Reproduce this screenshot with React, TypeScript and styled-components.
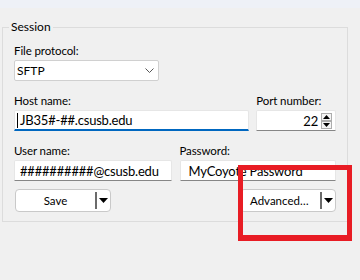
import React from "react";
import styled, { createGlobalStyle } from "styled-components";

const Global = createGlobalStyle`
  html, body { margin: 0; padding: 0; background: #f0f0f0; }
  body { width: 360px; height: 280px; overflow: hidden; font-family: Lato, "Noto Sans", sans-serif; color: #000; }
`;

const Page = styled.div`
  position: relative;
  width: 360px;
  height: 280px;
  background: #f0f0f0;
`;

const TopStrip = styled.div`
  height: 8px;
  background: #eef1f7;
`;

const Group = styled.section`
  position: relative;
  margin: 19px 0 0 2px;
  padding: 14px 11px 9px 11px;
  width: 346px;
  box-sizing: border-box;
  border: 1px solid #dcdcdc;
`;

const Legend = styled.div`
  position: absolute;
  top: -9px;
  left: 6px;
  padding: 0 2px;
  background: #f0f0f0;
  font-size: 12px;
  line-height: 16px;
`;

const Rows = styled.div`
  display: flex;
  flex-direction: column;
  gap: 11px;
`;

const Row = styled.div<{ $gap: number }>`
  display: flex;
  gap: ${(p) => p.$gap}px;
`;

const Field = styled.div<{ $w: number }>`
  display: flex;
  flex-direction: column;
  gap: 1px;
  width: ${(p) => p.$w}px;
`;

const Label = styled.div`
  font-size: 11.5px;
  letter-spacing: -0.1px;
  line-height: 17px;
  height: 17px;
`;

const Combo = styled.div`
  box-sizing: border-box;
  height: 21px;
  width: 145px;
  background: #fff;
  border: 1px solid #d0d0d0;
  border-radius: 2px;
  display: flex;
  align-items: center;
  justify-content: space-between;
  padding: 0 4px 0 2px;
  font-size: 12px;
`;

const Input = styled.div<{ $focus?: boolean; $align?: string; $pl?: number }>`
  box-sizing: border-box;
  height: 21px;
  background: #fff;
  border: 1px solid #e6e6e6;
  border-bottom: ${(p) => (p.$focus ? "2px solid #0067c0" : "1px solid #868686")};
  border-radius: 2px 2px 0 0;
  display: flex;
  align-items: center;
  justify-content: ${(p) => p.$align || "flex-start"};
  padding: 0 3px 0 ${(p) => p.$pl ?? 5}px;
  font-size: 13px;
  letter-spacing: -0.2px;
  white-space: nowrap;
  overflow: hidden;
`;

const Caret = styled.span`
  display: inline-block;
  width: 1px;
  height: 15px;
  background: #000;
  margin-right: 2px;
  margin-left: -3px;
`;

const SpinWrap = styled.div`
  display: flex;
  align-items: center;
  gap: 3px;
  height: 100%;
`;

const Spin = styled.div`
  display: flex;
  flex-direction: column;
`;

const SpinBtn = styled.div`
  width: 11px;
  height: 8px;
  box-sizing: border-box;
  border: 1px solid #adadad;
  background: #f4f4f4;
  display: flex;
  align-items: center;
  justify-content: center;
`;

const ButtonRow = styled.div`
  display: flex;
  justify-content: space-between;
  padding: 0 0 0 1px;
  margin-top: -3px;
`;

const SplitButton = styled.div`
  box-sizing: border-box;
  width: 96px;
  height: 23px;
  background: #fff;
  border: 1px solid #c9c9c9;
  border-radius: 4px;
  display: flex;
  align-items: center;
  font-size: 11.5px;
`;

const BtnText = styled.div<{ $align: string }>`
  flex: 1;
  text-align: ${(p) => p.$align};
  padding-left: ${(p) => (p.$align === "left" ? "9px" : "0")};
`;

const Divider = styled.div`
  width: 2px;
  height: 17px;
  background: #6b6b6b;
`;

const Arrow = styled.div`
  width: 12px;
  display: flex;
  justify-content: center;
  margin-right: 1px;
`;

const Highlight = styled.div`
  position: absolute;
  left: 238px;
  top: 165px;
  width: 114px;
  height: 76px;
  box-sizing: border-box;
  border: 5px solid #e81c24;
  border-bottom-width: 6px;
  pointer-events: none;
`;

const Tri = ({ up }: { up?: boolean }) => (
  <svg width="7" height="4" viewBox="0 0 7 4">
    <path d={up ? "M0 4 L3.5 0 L7 4 Z" : "M0 0 L7 0 L3.5 4 Z"} fill="#000" />
  </svg>
);

const DropTri = () => (
  <svg width="9" height="5" viewBox="0 0 9 5">
    <path d="M0 0 L9 0 L4.5 5 Z" fill="#000" />
  </svg>
);

const Chevron = () => (
  <svg width="9" height="5" viewBox="0 0 9 5">
    <path d="M0.5 0.5 L4.5 4.5 L8.5 0.5" fill="none" stroke="#555" strokeWidth="1" />
  </svg>
);

export default function App() {
  return (
    <Page>
      <Global />
      <TopStrip />
      <Group>
        <Legend>Session</Legend>
        <Rows>
          <Field $w={145}>
            <Label>File protocol:</Label>
            <Combo>
              <span>SFTP</span>
              <Chevron />
            </Combo>
          </Field>
          <Row $gap={7}>
            <Field $w={236}>
              <Label>Host name:</Label>
              <Input $focus>
                <Caret />
                JB35#-##.csusb.edu
              </Input>
            </Field>
            <Field $w={80}>
              <Label>Port number:</Label>
              <Input $align="flex-end">
                <SpinWrap>
                  <span>22</span>
                  <Spin>
                    <SpinBtn>
                      <Tri up />
                    </SpinBtn>
                    <SpinBtn>
                      <Tri />
                    </SpinBtn>
                  </Spin>
                </SpinWrap>
              </Input>
            </Field>
          </Row>
          <Row $gap={8}>
            <Field $w={158}>
              <Label>User name:</Label>
              <Input>##########@csusb.edu</Input>
            </Field>
            <Field $w={157}>
              <Label>Password:</Label>
              <Input $pl={8}>MyCoyote Password</Input>
            </Field>
          </Row>
          <ButtonRow>
            <SplitButton>
              <BtnText $align="center">Save</BtnText>
              <Divider />
              <Arrow>
                <DropTri />
              </Arrow>
            </SplitButton>
            <SplitButton>
              <BtnText $align="left">Advanced…</BtnText>
              <Divider />
              <Arrow>
                <DropTri />
              </Arrow>
            </SplitButton>
          </ButtonRow>
        </Rows>
      </Group>
      <Highlight />
    </Page>
  );
}
